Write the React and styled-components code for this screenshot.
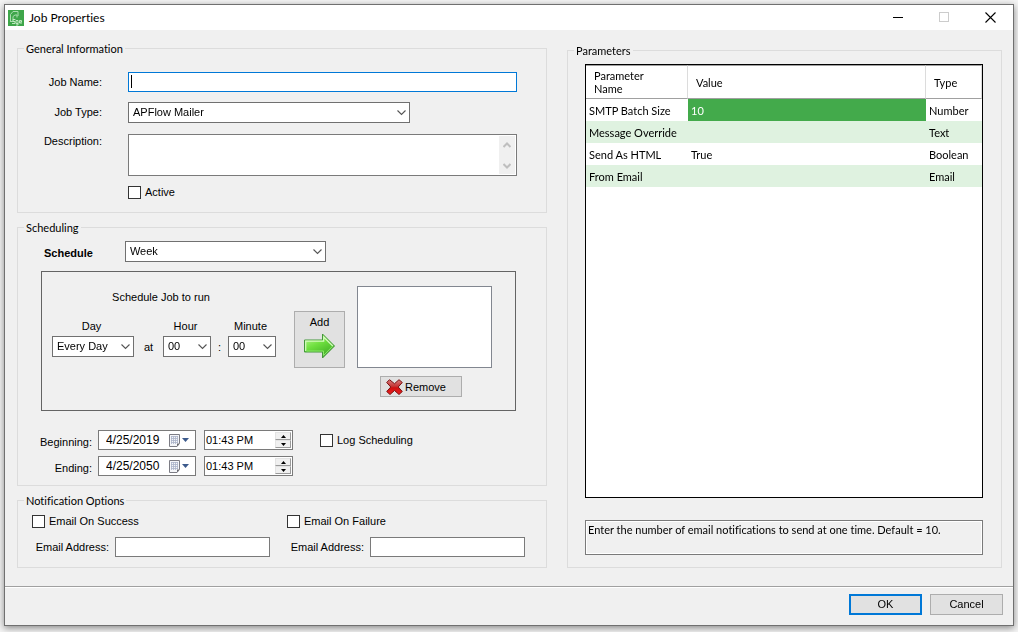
import React from "react";
import styled, { createGlobalStyle, css } from "styled-components";

const sans = '"Liberation Sans", Arial, sans-serif';
const compact = 'Lato, "Liberation Sans", sans-serif';

const GlobalStyle = createGlobalStyle`
  *, *::before, *::after { box-sizing: border-box; }
  body {
    margin: 0;
    background: #f4f4f4;
    color: #000;
    font: 11px/14px ${sans};
    font-variant-ligatures: none;
  }
  button, input, select, textarea {
    margin: 0;
    padding: 0;
    border-radius: 0;
    color: inherit;
    font: inherit;
    outline: none;
  }
`;

const Desktop = styled.div`
  display: flex;
  min-height: 100vh;
  padding: 4px 4px 6px;
`;

const Dialog = styled.form`
  flex: 1;
  display: flex;
  flex-direction: column;
  border: 1px solid #707070;
  background: #f0f0f0;
  box-shadow: 0 2px 7px rgba(0, 0, 0, 0.45);
`;

const TitleBar = styled.header`
  display: flex;
  align-items: center;
  height: 25px;
  padding-left: 3px;
  background: #fff;
`;

const Title = styled.h1`
  flex: 1;
  margin: 0 0 0 5px;
  font-family: ${compact};
  font-size: 12px;
  font-weight: 400;
  line-height: 16px;
`;

const WindowButton = styled.button`
  display: grid;
  place-items: center;
  width: 46px;
  height: 25px;
  border: 0;
  background: none;
`;

const Columns = styled.main`
  flex: 1;
  display: grid;
  grid-template-columns: 530fr 435fr;
  gap: 20px;
  padding: 12px 11px 18px 12px;
`;

const Column = styled.div`
  display: flex;
  flex-direction: column;
  gap: 8px;
  min-width: 0;
  padding-top: ${(p) => p.$top || 0}px;
`;

const Group = styled.fieldset`
  display: flex;
  flex-direction: column;
  flex: ${(p) => (p.$grow ? 1 : "none")};
  min-width: 0;
  margin: 0;
  padding: 0;
  border: 1px solid #dcdcdc;
`;

const Legend = styled.legend`
  margin-left: 6px;
  padding: 0 2px;
  font-family: ${compact};
  line-height: 13px;
`;

const GroupBody = styled.div`
  flex: 1;
  display: flex;
  flex-direction: column;
  padding: ${(p) => p.$pad};
`;

const FormGrid = styled.div`
  display: grid;
  grid-template-columns: 84px 1fr;
  grid-template-rows: 20px 22px 42px 13px;
  gap: 10px 26px;
`;

const Label = styled.label`
  padding-top: ${(p) => p.$top || 0}px;
  text-align: ${(p) => p.$align || "right"};
  font-weight: ${(p) => (p.$strong ? 700 : 400)};
  white-space: nowrap;
`;

const TextInput = styled.input`
  width: 100%;
  height: 20px;
  padding: 0 3px;
  border: 1px solid #7a7a7a;
  background: #fff;

  ${(p) => p.$active && css`
    border-color: #0078d7;
    background: linear-gradient(#000, #000) 2px 2px / 1px 13px no-repeat #fff;
    caret-color: transparent;
  `}
`;

const SelectBox = styled.div`
  position: relative;
  width: ${(p) => p.$width || 100}px;
  height: 21px;

  select {
    display: block;
    width: 100%;
    height: 100%;
    padding: 0 18px 2px 4px;
    border: 1px solid #707070;
    background: #fff;
    appearance: none;
  }

  svg {
    position: absolute;
    top: 8px;
    right: 4px;
    pointer-events: none;
  }
`;

const MemoBox = styled.div`
  display: flex;
  padding: 1px;
  border: 1px solid #7a7a7a;
  background: #fff;

  textarea {
    flex: 1;
    min-width: 0;
    border: 0;
    background: none;
    resize: none;
  }
`;

const ScrollTrack = styled.div`
  display: flex;
  flex-direction: column;
  align-items: center;
  justify-content: space-between;
  width: 16px;
  padding: 6px 0 5px;
  background: #f0f0f0;
`;

const CheckLabel = styled.label`
  display: flex;
  align-items: flex-start;
  gap: 4px;
  height: 13px;
  line-height: 12px;
  white-space: nowrap;

  input {
    width: 13px;
    height: 13px;
    border: 1px solid #333;
    background: #fff;
    appearance: none;
  }
`;

const ScheduleRow = styled.div`
  display: flex;
  gap: 32px;
  padding-left: 26px;
`;

const SchedulePanel = styled.div`
  display: flex;
  height: 140px;
  margin: 9px 30px 19px 23px;
  padding: 14px 10px 0;
  border: 1px solid #646464;
`;

const TimePicker = styled.div`
  display: grid;
  grid-template-columns: 82px 29px 48px 17px 48px;
  grid-template-rows: 26px 14px 21px;
  row-gap: 3px;
  align-content: start;
  margin-right: 18px;
  padding-top: 4px;
  text-align: center;
`;

const PickerTitle = styled.div`
  grid-column: 1 / -1;
  padding-right: 6px;
`;

const PickerSeparator = styled.span`
  padding-top: 4px;
`;

const PickerLabel = styled.label`
  grid-column: ${(p) => p.$col};
  padding-right: 3px;
`;

const PushButton = styled.button`
  display: flex;
  align-items: center;
  justify-content: center;
  width: ${(p) => p.$width}px;
  height: 21px;
  border: 1px solid #adadad;
  background: #e1e1e1;
  ${(p) => p.$primary && css`border: 2px solid #0078d7;`}
`;

const AddButton = styled(PushButton)`
  flex-direction: column;
  justify-content: flex-start;
  gap: 4px;
  height: 57px;
  margin: 25px 12px 0 0;
  padding-top: 3px;
`;

const RemoveButton = styled(PushButton)`
  justify-content: flex-start;
  gap: 2px;
  margin-left: 23px;
  padding-left: 5px;
`;

const ListColumn = styled.div`
  display: flex;
  flex-direction: column;
  gap: 8px;
`;

const ListBox = styled.select`
  width: 135px;
  height: 82px;
  border: 1px solid #828790;
  background: #fff;
`;

const DateRow = styled.div`
  display: flex;
  height: 20px;
  margin-bottom: 6px;

  &:last-child { margin-bottom: 0; }

  ${CheckLabel} { margin: 4px 0 0 19px; }
`;

const DateLabel = styled(Label)`
  width: 74px;
  margin-right: 6px;
  padding-top: 5px;
`;

const DateField = styled.div`
  display: flex;
  align-items: center;
  width: ${(p) => p.$width}px;
  margin-right: 8px;
  border: 1px solid #7a7a7a;
  background: #fff;

  input {
    flex: 1;
    min-width: 0;
    height: 18px;
    padding: 0 0 1px ${(p) => p.$inset}px;
    border: 0;
    background: none;
    font-size: ${(p) => p.$size}px;
  }
`;

const DropButton = styled.button`
  width: 28px;
  height: 18px;
  border: 0;
  background: none;

  svg { display: block; }
`;

const Spinner = styled.div`
  display: flex;
  flex-direction: column;
  width: 17px;
  padding: 1px 1px 1px 0;
`;

const SpinButton = styled.button`
  display: grid;
  place-items: center;
  width: 16px;
  height: 8px;
  border: 1px solid #e3e3e3;
  border-right-color: #9a9a9a;
  border-bottom-color: #9a9a9a;
  background: #f0f0f0;
`;

const NotifyGrid = styled.div`
  display: grid;
  grid-template-columns: 255px 255px;
`;

const NotifyItem = styled.div`
  display: flex;
  flex-direction: column;
  gap: 9px;
`;

const AddressRow = styled.div`
  display: grid;
  grid-template-columns: 77px 155px;
  gap: 6px;
`;

const TableFrame = styled.div`
  flex: 1;
  border: 1px solid #000;
  background: #fff;
`;

const ParamTable = styled.table`
  width: 100%;
  border-collapse: separate;
  border-spacing: 0;
  table-layout: fixed;
  font-family: ${compact};
  line-height: 13px;

  th {
    height: 34px;
    padding: 0 8px;
    border-top: 1px solid #a0a0a0;
    border-right: 1px solid #dcdcdc;
    border-bottom: 1px solid #a0a0a0;
    font-weight: 400;
    text-align: left;
  }

  td {
    height: 22px;
    padding: 0 3px;
    white-space: nowrap;
  }

  tbody tr:nth-child(even) { background: #dff2e0; }
`;

const ValueCell = styled.td`
  ${(p) => p.$selected && css`background: #43aa4b; color: #fff;`}
`;

const HelpText = styled.output`
  display: block;
  min-height: 35px;
  margin-top: 22px;
  padding: 2px;
  border: 1px solid #7a7a7a;
  box-shadow: inset 0 0 0 1px #fff;
  font-family: ${compact};
`;

const Footer = styled.footer`
  display: flex;
  justify-content: flex-end;
  gap: 8px;
  padding: 7px 10px 10px;
  border-top: 1px solid #a0a0a0;
  box-shadow: inset 0 1px 0 #fff;

  ${PushButton} { padding-bottom: 2px; }
`;

const Chevron = () => (
  <svg width="9" height="6" viewBox="0 0 9 6" fill="none">
    <path d="M0.5 0.5 4.5 4.5 8.5 0.5" stroke="#555" strokeWidth="1.1" />
  </svg>
);

const ScrollChevron = ({ up }) => (
  <svg width="8" height="6" viewBox="0 0 8 6" fill="none">
    <path d={up ? "M0.5 5 4 1.5 7.5 5" : "M0.5 1 4 4.5 7.5 1"} stroke="#bfbfbf" strokeWidth="2" />
  </svg>
);

const AppLogo = () => (
  <svg width="16" height="16" viewBox="0 0 16 16" fill="none">
    <rect width="16" height="16" fill="#3ea64a" />
    <path d="M2.5 11.5V4.5L5 1.5H10V6M5 10.5V6.5L7 5H9V7.5" stroke="#a9dcae" />
    <path d="M2 11.5H5.5M5 9.5H7.5" stroke="#a9dcae" />
    <path d="M7 9.5H5V11.5H7V13.5H4M10 13.5H8V10.5H10V15H8M14 13H11.5V10.5H13.5V12H12" stroke="#c9ecca" strokeWidth="0.9" />
  </svg>
);

const AddArrow = () => (
  <svg width="32" height="26" viewBox="0 0 32 26">
    <defs>
      <linearGradient id="arrowFill" x1="0" y1="0" x2="0.6" y2="1">
        <stop offset="0" stopColor="#c4fb9c" />
        <stop offset="0.5" stopColor="#6fe03f" />
        <stop offset="1" stopColor="#3fae25" />
      </linearGradient>
    </defs>
    <path d="M0.5 7H18.5V1L30.5 13 18.5 25V19H0.5Z" fill="url(#arrowFill)" stroke="#43963a" />
    <path d="M1.7 18V8.2H19.7V4L28.8 13" fill="none" stroke="#d6fbc0" strokeWidth="1.2" />
    <path d="M2.5 18H19.5V22.5L28.8 13" fill="none" stroke="#8be56a" />
  </svg>
);

const RemoveCross = () => (
  <svg width="17" height="16" viewBox="0 0 17 16">
    <defs>
      <linearGradient id="crossFill" x1="0" y1="0" x2="0" y2="1">
        <stop offset="0" stopColor="#d98080" />
        <stop offset="0.45" stopColor="#c43434" />
        <stop offset="0.55" stopColor="#cf1010" />
        <stop offset="1" stopColor="#f02020" />
      </linearGradient>
    </defs>
    <path
      d="M3.5 0.7 8.5 4.7 13 0.7 16.3 3.5 12.2 8 16.3 12.5 13 15.5 8.5 11.5 4 15.5 0.7 12.5 4.8 8 0.7 3.5Z"
      fill="url(#crossFill)"
      stroke="#7a1010"
      strokeLinejoin="round"
    />
  </svg>
);

const CalendarIcon = () => (
  <svg width="26" height="18" viewBox="0 0 26 18">
    <path d="M2.5 3.5H12.5V12.5L10 15.5H2.5Z" fill="#f4f5f8" stroke="#7c7c84" />
    <path d="M4 5.5H11M4 7.5H11M4 9.5H11M4 11.5H11M4.5 5V13M6.5 5V13M8.5 5V13M10.5 5V12" stroke="#a9b3c8" strokeWidth="0.8" />
    <path d="M12.5 12.5 10 15.5V12.5Z" fill="#6a6a70" />
    <path d="M15 7H22L18.5 11Z" fill="#3c5a8c" />
  </svg>
);

const SpinArrow = ({ up }) => (
  <svg width="5" height="3" viewBox="0 0 5 3">
    <path d={up ? "M0 3 2.5 0 5 3Z" : "M0 0 2.5 3 5 0Z"} fill="#000" />
  </svg>
);

function Dropdown({ id, width, value }) {
  return (
    <SelectBox $width={width}>
      <select id={id} defaultValue={value}>
        <option>{value}</option>
      </select>
      <Chevron />
    </SelectBox>
  );
}

function DateTime({ id, label, date, time }) {
  return (
    <>
      <DateLabel htmlFor={id}>{label}</DateLabel>
      <DateField $width={98} $inset={7} $size={12}>
        <input id={id} defaultValue={date} />
        <DropButton type="button" aria-label={`${label} calendar`}>
          <CalendarIcon />
        </DropButton>
      </DateField>
      <DateField $width={89} $inset={1} $size={11}>
        <input aria-label={`${label} time`} defaultValue={time} />
        <Spinner>
          <SpinButton type="button" aria-label="Later"><SpinArrow up /></SpinButton>
          <SpinButton type="button" aria-label="Earlier"><SpinArrow /></SpinButton>
        </Spinner>
      </DateField>
    </>
  );
}

function Notify({ id, label }) {
  return (
    <NotifyItem>
      <CheckLabel>
        <input type="checkbox" />
        {label}
      </CheckLabel>
      <AddressRow>
        <Label htmlFor={id} $top={3}>Email Address:</Label>
        <TextInput id={id} />
      </AddressRow>
    </NotifyItem>
  );
}

const parameters = [
  { name: "SMTP Batch Size", value: "10", type: "Number" },
  { name: "Message Override", value: "", type: "Text" },
  { name: "Send As HTML", value: "True", type: "Boolean" },
  { name: "From Email", value: "", type: "Email" },
];

export default function App() {
  return (
    <Desktop>
      <GlobalStyle />
      <Dialog onSubmit={(e) => e.preventDefault()}>
        <TitleBar>
          <AppLogo />
          <Title>Job Properties</Title>
          <WindowButton type="button" aria-label="Minimize">
            <svg width="11" height="11"><path d="M0 5.5H10" stroke="#000" /></svg>
          </WindowButton>
          <WindowButton type="button" aria-label="Maximize" disabled>
            <svg width="11" height="11"><rect x="0.5" y="0.5" width="9" height="9" fill="none" stroke="#ccc" /></svg>
          </WindowButton>
          <WindowButton type="button" aria-label="Close">
            <svg width="11" height="11"><path d="M0.5 0.5 10.5 10.5M10.5 0.5 0.5 10.5" stroke="#000" strokeWidth="1.1" /></svg>
          </WindowButton>
        </TitleBar>

        <Columns>
          <Column>
            <Group>
              <Legend>General Information</Legend>
              <GroupBody $pad="17px 29px 13px 0">
                <FormGrid>
                  <Label htmlFor="job-name" $top={3}>Job Name:</Label>
                  <TextInput id="job-name" $active autoFocus />
                  <Label htmlFor="job-type" $top={3}>Job Type:</Label>
                  <Dropdown id="job-type" width={282} value="APFlow Mailer" />
                  <Label htmlFor="description">Description:</Label>
                  <MemoBox>
                    <textarea id="description" />
                    <ScrollTrack>
                      <ScrollChevron up />
                      <ScrollChevron />
                    </ScrollTrack>
                  </MemoBox>
                  <span />
                  <CheckLabel>
                    <input type="checkbox" />
                    Active
                  </CheckLabel>
                </FormGrid>
              </GroupBody>
            </Group>

            <Group>
              <Legend>Scheduling</Legend>
              <GroupBody $pad="7px 0 9px">
                <ScheduleRow>
                  <Label htmlFor="schedule" $top={5} $align="left" $strong>Schedule</Label>
                  <Dropdown id="schedule" width={201} value="Week" />
                </ScheduleRow>
                <SchedulePanel>
                  <TimePicker>
                    <PickerTitle>Schedule Job to run</PickerTitle>
                    <PickerLabel htmlFor="day" $col={1}>Day</PickerLabel>
                    <PickerLabel htmlFor="hour" $col={3}>Hour</PickerLabel>
                    <PickerLabel htmlFor="minute" $col={5}>Minute</PickerLabel>
                    <Dropdown id="day" width={82} value="Every Day" />
                    <PickerSeparator>at</PickerSeparator>
                    <Dropdown id="hour" width={48} value="00" />
                    <PickerSeparator>:</PickerSeparator>
                    <Dropdown id="minute" width={48} value="00" />
                  </TimePicker>
                  <AddButton type="button" $width={51}>
                    Add
                    <AddArrow />
                  </AddButton>
                  <ListColumn>
                    <ListBox size={5} aria-label="Scheduled times" />
                    <RemoveButton type="button" $width={82}>
                      <RemoveCross />
                      Remove
                    </RemoveButton>
                  </ListColumn>
                </SchedulePanel>
                <DateRow>
                  <DateTime id="beginning" label="Beginning:" date="4/25/2019" time="01:43 PM" />
                  <CheckLabel>
                    <input type="checkbox" />
                    Log Scheduling
                  </CheckLabel>
                </DateRow>
                <DateRow>
                  <DateTime id="ending" label="Ending:" date="4/25/2050" time="01:43 PM" />
                </DateRow>
              </GroupBody>
            </Group>

            <Group>
              <Legend>Notification Options</Legend>
              <GroupBody $pad="8px 0 10px 14px">
                <NotifyGrid>
                  <Notify id="success-address" label="Email On Success" />
                  <Notify id="failure-address" label="Email On Failure" />
                </NotifyGrid>
              </GroupBody>
            </Group>
          </Column>

          <Column $top={2}>
            <Group $grow>
              <Legend>Parameters</Legend>
              <GroupBody $pad="7px 18px 12px 17px">
                <TableFrame>
                  <ParamTable>
                    <colgroup>
                      <col style={{ width: 102 }} />
                      <col />
                      <col style={{ width: 56 }} />
                    </colgroup>
                    <thead>
                      <tr>
                        <th>Parameter<br />Name</th>
                        <th>Value</th>
                        <th>Type</th>
                      </tr>
                    </thead>
                    <tbody>
                      {parameters.map((p, i) => (
                        <tr key={p.name}>
                          <td>{p.name}</td>
                          <ValueCell $selected={i === 0}>{p.value}</ValueCell>
                          <td>{p.type}</td>
                        </tr>
                      ))}
                    </tbody>
                  </ParamTable>
                </TableFrame>
                <HelpText>
                  Enter the number of email notifications to send at one time. Default = 10.
                </HelpText>
              </GroupBody>
            </Group>
          </Column>
        </Columns>

        <Footer>
          <PushButton type="submit" $width={73} $primary>OK</PushButton>
          <PushButton type="button" $width={73}>Cancel</PushButton>
        </Footer>
      </Dialog>
    </Desktop>
  );
}
